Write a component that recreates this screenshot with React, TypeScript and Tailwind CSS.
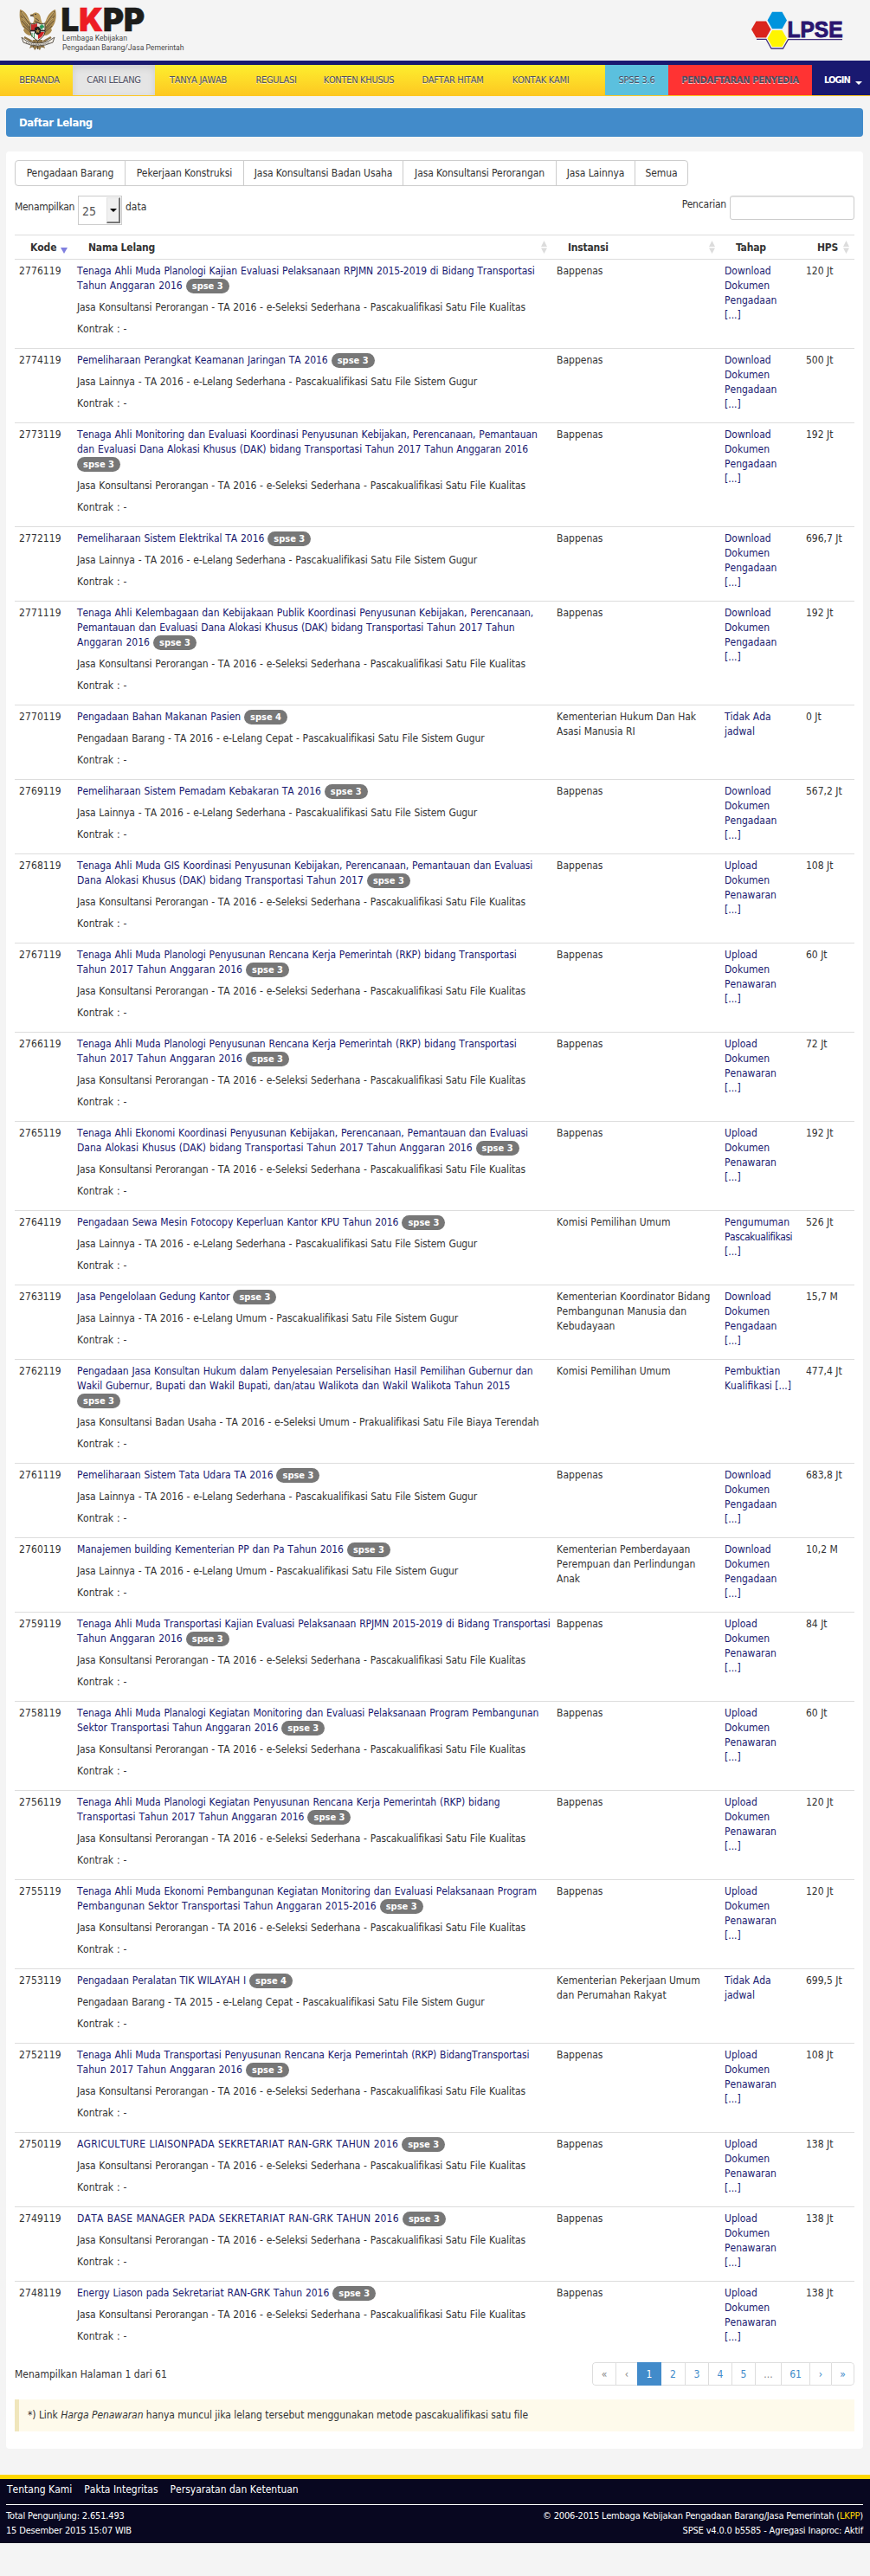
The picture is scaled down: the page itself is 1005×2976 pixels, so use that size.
type Row = {
  kode: string;
  nama: string[];
  spse?: number;
  caps?: boolean;
  jenis: string;
  instansi: string[];
  tahap: string[];
  hps: string;
};

const PERORANGAN = "Jasa Konsultansi Perorangan - TA 2016 - e-Seleksi Sederhana - Pascakualifikasi Satu File Kualitas";
const LAINNYA = "Jasa Lainnya - TA 2016 - e-Lelang Sederhana - Pascakualifikasi Satu File Sistem Gugur";
const LAINNYA_UMUM = "Jasa Lainnya - TA 2016 - e-Lelang Umum - Pascakualifikasi Satu File Sistem Gugur";
const BAPPENAS = ["Bappenas"];
const DOWNLOAD = ["Download", "Dokumen", "Pengadaan", "[...]"];
const UPLOAD = ["Upload", "Dokumen", "Penawaran", "[...]"];
const TIDAK_ADA = ["Tidak Ada", "jadwal"];

// An empty last line in `nama` puts the badge on a line of its own.
const rows: Row[] = [
  { kode: "2776119", nama: ["Tenaga Ahli Muda Planologi Kajian Evaluasi Pelaksanaan RPJMN 2015-2019 di Bidang Transportasi", "Tahun Anggaran 2016"], jenis: PERORANGAN, instansi: BAPPENAS, tahap: DOWNLOAD, hps: "120 Jt" },
  { kode: "2774119", nama: ["Pemeliharaan Perangkat Keamanan Jaringan TA 2016"], jenis: LAINNYA, instansi: BAPPENAS, tahap: DOWNLOAD, hps: "500 Jt" },
  { kode: "2773119", nama: ["Tenaga Ahli Monitoring dan Evaluasi Koordinasi Penyusunan Kebijakan, Perencanaan, Pemantauan", "dan Evaluasi Dana Alokasi Khusus (DAK) bidang Transportasi Tahun 2017 Tahun Anggaran 2016", ""], jenis: PERORANGAN, instansi: BAPPENAS, tahap: DOWNLOAD, hps: "192 Jt" },
  { kode: "2772119", nama: ["Pemeliharaan Sistem Elektrikal TA 2016"], jenis: LAINNYA, instansi: BAPPENAS, tahap: DOWNLOAD, hps: "696,7 Jt" },
  { kode: "2771119", nama: ["Tenaga Ahli Kelembagaan dan Kebijakaan Publik Koordinasi Penyusunan Kebijakan, Perencanaan,", "Pemantauan dan Evaluasi Dana Alokasi Khusus (DAK) bidang Transportasi Tahun 2017 Tahun", "Anggaran 2016"], jenis: PERORANGAN, instansi: BAPPENAS, tahap: DOWNLOAD, hps: "192 Jt" },
  { kode: "2770119", nama: ["Pengadaan Bahan Makanan Pasien"], spse: 4, jenis: "Pengadaan Barang - TA 2016 - e-Lelang Cepat - Pascakualifikasi Satu File Sistem Gugur", instansi: ["Kementerian Hukum Dan Hak", "Asasi Manusia RI"], tahap: TIDAK_ADA, hps: "0 Jt" },
  { kode: "2769119", nama: ["Pemeliharaan Sistem Pemadam Kebakaran TA 2016"], jenis: LAINNYA, instansi: BAPPENAS, tahap: DOWNLOAD, hps: "567,2 Jt" },
  { kode: "2768119", nama: ["Tenaga Ahli Muda GIS Koordinasi Penyusunan Kebijakan, Perencanaan, Pemantauan dan Evaluasi", "Dana Alokasi Khusus (DAK) bidang Transportasi Tahun 2017"], jenis: PERORANGAN, instansi: BAPPENAS, tahap: UPLOAD, hps: "108 Jt" },
  { kode: "2767119", nama: ["Tenaga Ahli Muda Planologi Penyusunan Rencana Kerja Pemerintah (RKP) bidang Transportasi", "Tahun 2017 Tahun Anggaran 2016"], jenis: PERORANGAN, instansi: BAPPENAS, tahap: UPLOAD, hps: "60 Jt" },
  { kode: "2766119", nama: ["Tenaga Ahli Muda Planologi Penyusunan Rencana Kerja Pemerintah (RKP) bidang Transportasi", "Tahun 2017 Tahun Anggaran 2016"], jenis: PERORANGAN, instansi: BAPPENAS, tahap: UPLOAD, hps: "72 Jt" },
  { kode: "2765119", nama: ["Tenaga Ahli Ekonomi Koordinasi Penyusunan Kebijakan, Perencanaan, Pemantauan dan Evaluasi", "Dana Alokasi Khusus (DAK) bidang Transportasi Tahun 2017 Tahun Anggaran 2016"], jenis: PERORANGAN, instansi: BAPPENAS, tahap: UPLOAD, hps: "192 Jt" },
  { kode: "2764119", nama: ["Pengadaan Sewa Mesin Fotocopy Keperluan Kantor KPU Tahun 2016"], jenis: LAINNYA, instansi: ["Komisi Pemilihan Umum"], tahap: ["Pengumuman", "Pascakualifikasi", "[...]"], hps: "526 Jt" },
  { kode: "2763119", nama: ["Jasa Pengelolaan Gedung Kantor"], jenis: LAINNYA_UMUM, instansi: ["Kementerian Koordinator Bidang", "Pembangunan Manusia dan", "Kebudayaan"], tahap: DOWNLOAD, hps: "15,7 M" },
  { kode: "2762119", nama: ["Pengadaan Jasa Konsultan Hukum dalam Penyelesaian Perselisihan Hasil Pemilihan Gubernur dan", "Wakil Gubernur, Bupati dan Wakil Bupati, dan/atau Walikota dan Wakil Walikota Tahun 2015", ""], jenis: "Jasa Konsultansi Badan Usaha - TA 2016 - e-Seleksi Umum - Prakualifikasi Satu File Biaya Terendah", instansi: ["Komisi Pemilihan Umum"], tahap: ["Pembuktian", "Kualifikasi [...]"], hps: "477,4 Jt" },
  { kode: "2761119", nama: ["Pemeliharaan Sistem Tata Udara TA 2016"], jenis: LAINNYA, instansi: BAPPENAS, tahap: DOWNLOAD, hps: "683,8 Jt" },
  { kode: "2760119", nama: ["Manajemen building Kementerian PP dan Pa Tahun 2016"], jenis: LAINNYA_UMUM, instansi: ["Kementerian Pemberdayaan", "Perempuan dan Perlindungan", "Anak"], tahap: DOWNLOAD, hps: "10,2 M" },
  { kode: "2759119", nama: ["Tenaga Ahli Muda Transportasi Kajian Evaluasi Pelaksanaan RPJMN 2015-2019 di Bidang Transportasi", "Tahun Anggaran 2016"], jenis: PERORANGAN, instansi: BAPPENAS, tahap: UPLOAD, hps: "84 Jt" },
  { kode: "2758119", nama: ["Tenaga Ahli Muda Planalogi Kegiatan Monitoring dan Evaluasi Pelaksanaan Program Pembangunan", "Sektor Transportasi Tahun Anggaran 2016"], jenis: PERORANGAN, instansi: BAPPENAS, tahap: UPLOAD, hps: "60 Jt" },
  { kode: "2756119", nama: ["Tenaga Ahli Muda Planologi Kegiatan Penyusunan Rencana Kerja Pemerintah (RKP) bidang", "Transportasi Tahun 2017 Tahun Anggaran 2016"], jenis: PERORANGAN, instansi: BAPPENAS, tahap: UPLOAD, hps: "120 Jt" },
  { kode: "2755119", nama: ["Tenaga Ahli Muda Ekonomi Pembangunan Kegiatan Monitoring dan Evaluasi Pelaksanaan Program", "Pembangunan Sektor Transportasi Tahun Anggaran 2015-2016"], jenis: PERORANGAN, instansi: BAPPENAS, tahap: UPLOAD, hps: "120 Jt" },
  { kode: "2753119", nama: ["Pengadaan Peralatan TIK WILAYAH I"], spse: 4, jenis: "Pengadaan Barang - TA 2015 - e-Lelang Cepat - Pascakualifikasi Satu File Sistem Gugur", instansi: ["Kementerian Pekerjaan Umum", "dan Perumahan Rakyat"], tahap: TIDAK_ADA, hps: "699,5 Jt" },
  { kode: "2752119", nama: ["Tenaga Ahli Muda Transportasi Penyusunan Rencana Kerja Pemerintah (RKP) BidangTransportasi", "Tahun 2017 Tahun Anggaran 2016"], jenis: PERORANGAN, instansi: BAPPENAS, tahap: UPLOAD, hps: "108 Jt" },
  { kode: "2750119", nama: ["AGRICULTURE LIAISONPADA SEKRETARIAT RAN-GRK TAHUN 2016"], caps: true, jenis: PERORANGAN, instansi: BAPPENAS, tahap: UPLOAD, hps: "138 Jt" },
  { kode: "2749119", nama: ["DATA BASE MANAGER PADA SEKRETARIAT RAN-GRK TAHUN 2016"], caps: true, jenis: PERORANGAN, instansi: BAPPENAS, tahap: UPLOAD, hps: "138 Jt" },
  { kode: "2748119", nama: ["Energy Liason pada Sekretariat RAN-GRK Tahun 2016"], jenis: PERORANGAN, instansi: BAPPENAS, tahap: UPLOAD, hps: "138 Jt" },
];

const COLS = "grid grid-cols-[67px_554px_194px_94px_61px]";

function Garuda() {
  return (
    <svg className="h-12 w-11 shrink-0" viewBox="22 10 44 48">
      <path d="M23 11C22 20 23 28 28 33L27 35C29 39 32 41 36 41L40 44H47L51 41C55 41 58 39 60 35L59 33C64 28 66 20 64 11C60 12 55 17 53 24L50 29H37L34 24C32 17 28 12 23 11Z" fill="#a98a50" />
      <path d="M24 13L34 28M24 18L34 32M25 24L35 35M27 30L36 38M63 13L53 28M63 18L53 32M62 24L52 35M60 30L51 38" stroke="#63523a" strokeWidth="1" />
      <path d="M25 14L33 24M26 21L34 30M62 14L54 24M61 21L53 30" stroke="#dcc080" strokeWidth=".8" />
      <path d="M34 17L38 16C39 14 43 14 45 16C48 19 46 23 50 28H37C40 24 40 21 38 18Z" fill="#b6975a" />
      <path d="M39 17L35 18L39 19M41 21L45 24M40 24L46 27" stroke="#594a36" fill="none" strokeWidth="1" />
      <circle cx="41" cy="16.5" r=".8" fill="#222" />
      <path d="M38 46L34 56L38 54L40 58L43 55L46 58L48 54L52 56L49 46Z" fill="#917748" />
      <path d="M40 48L38 55M43.5 48V57M47 48L49 55" stroke="#54452f" strokeWidth=".9" />
      <path d="M28 43L37 48M59 43L50 48" stroke="#8d7347" strokeWidth="2.5" />
      <path d="M35 27Q39 29 43 26Q47 29 52 27V37Q51 43 43.5 47Q36 43 35 37Z" fill="#e9e6dd" stroke="#443b2d" strokeWidth="1" />
      <path d="M36 28Q39 29 43 27V35H36Z" fill="#c62a2b" />
      <path d="M43.5 36H51Q51 42 43.5 46Z" fill="#ddd9cf" />
      <path d="M36 36H43.5V46Q36 42 36 37Z" fill="#eee" />
      <path d="M44 37H51Q50 42 44 45Z" fill="#cf2325" />
      <path d="M35 35.5H52" stroke="#222" strokeWidth="1.6" />
      <path d="M40 32L44 30.5L47 33V38L43.5 40.5L40 38Z" fill="#252321" />
      <path d="M43.5 33L44.5 35L46 35.2L45 36.5L45.3 38L43.5 37.2L41.8 38L42.2 36.5L41 35.2L42.8 35Z" fill="#a7884b" />
      <path d="M46 31.5C46 28 51 28 50.5 31.5L48.5 32V34.5" fill="#23975a" stroke="#23975a" strokeWidth="1" />
      <path d="M37 38V43M39.5 38V44" stroke="#3c9a60" strokeWidth="1" />
      <path d="M25 43L30 47Q43.5 53 57 47L63 43L61 49Q43.5 57 27 49Z" fill="#eeeae2" stroke="#514b43" strokeWidth=".9" />
      <path d="M30 49Q43.5 54 57 49" fill="none" stroke="#65605a" strokeWidth="1.2" strokeDasharray="1 1" />
    </svg>
  );
}

function LkppLogo() {
  return (
    <svg className="h-[62px] w-[152px]" viewBox="70 0 152 62">
      <text x="70.5" y="36.4" fontFamily="Inter, sans-serif" fontWeight="900" fontSize="36.3" fill="#1d1d1b" stroke="#1d1d1b" strokeWidth="0.6" textLength="96.5" lengthAdjust="spacingAndGlyphs">
        L<tspan fill="#ed1c24" stroke="#ed1c24">K</tspan>PP
      </text>
      <g fontFamily="Roboto, sans-serif" fontSize="8.8" fill="#4a4a4a">
        <text x="72" y="47" textLength="75" lengthAdjust="spacingAndGlyphs">Lembaga Kebijakan</text>
        <text x="72" y="57.5" textLength="140.5" lengthAdjust="spacingAndGlyphs">Pengadaan Barang/Jasa Pemerintah</text>
      </g>
    </svg>
  );
}

function LpseLogo() {
  return (
    <svg className="h-[46px] w-[108px] overflow-visible" viewBox="867 13 108 46">
      <path d="M874 45.3H885L891 56H904.5L910.5 45.6H973" fill="none" stroke="#41307d" strokeWidth="1.3" />
      <path d="M868 34L873.5 24.5H885L890.5 34L885 43.5H873.5Z" fill="#da251d" />
      <path d="M886.5 23.5L892 13.8H903.5L909 23.5L903.5 33.2H892Z" fill="#0093dd" />
      <path d="M886.5 44.5L892 35H903.5L909 44.5L903.5 54H892Z" fill="#fff500" />
      <text x="909.5" y="43" fontFamily="Liberation Sans, sans-serif" fontWeight="700" fontSize="26" fill="#2b1670" stroke="#2b1670" strokeWidth="1" textLength="64" lengthAdjust="spacingAndGlyphs">LPSE</text>
    </svg>
  );
}

function SortIcon() {
  return (
    <svg className="mt-[6px] mr-[6px] h-[15px] w-[7px] shrink-0" viewBox="0 0 7 15">
      <path d="M0 7L3.5 0L7 7ZM0 8.5H7L3.5 15Z" fill="#dcdcdc" />
    </svg>
  );
}

function Heading({ children, sort }: { children: string; sort?: boolean }) {
  return (
    <div className="flex justify-between pl-[18px] leading-[28px]">
      <span className="tracking-[-0.2px]">{children}</span>
      {sort && <SortIcon />}
    </div>
  );
}

function Lines({ items }: { items: string[] }) {
  return (
    <>
      {items.map((t, i) => (
        <span key={i} className={`block ${t.includes("kualifikasi") ? "tracking-[-0.45px]" : ""}`}>{t}</span>
      ))}
    </>
  );
}

function titleSpacing(row: Row, line: number) {
  if (row.caps) return "tracking-[0.24px] [word-spacing:0.5px]";
  if (row.nama.length === 1) return "tracking-[-0.06px] [word-spacing:0.5px]";
  if (line === row.nama.length - 1) return "[word-spacing:0.6px]";
  return "tracking-[-0.1px] [word-spacing:0.6px]";
}

function LelangRow({ row }: { row: Row }) {
  const last = row.nama.length - 1;
  return (
    <div className={`${COLS} border-t border-[#ddd] py-[5px] whitespace-nowrap [font-kerning:none]`}>
      <div className="pl-[5px] tracking-[0.1px]">{row.kode}</div>
      <div className="pl-[5px]">
        <div className="mb-2 text-[#191970]">
          {row.nama.map((t, i) => (
            <div key={i} className="flex h-[17px] gap-1">
              {t && <span className={titleSpacing(row, i)}>{t}</span>}
              {i === last && (
                <span className="h-[17px] w-[50px] rounded-full bg-[#777] text-center text-[11px] leading-[18px] font-bold text-white">
                  spse {row.spse ?? 3}
                </span>
              )}
            </div>
          ))}
        </div>
        <p className="mb-2 tracking-[-0.12px] [word-spacing:0.5px]">{row.jenis}</p>
        <p className="mb-2 [word-spacing:0.5px]">Kontrak : -</p>
      </div>
      <div className="pl-[5px]"><Lines items={row.instansi} /></div>
      <div className="pl-[5px] text-[#191970]"><Lines items={row.tahap} /></div>
      <div className="pl-[5px]">{row.hps}</div>
    </div>
  );
}

const nav = [
  { label: "BERANDA", w: "w-[77px]" },
  { label: "CARI LELANG", w: "w-[95px]", active: true },
  { label: "TANYA JAWAB", w: "w-[100px]" },
  { label: "REGULASI", w: "w-[80px]" },
  { label: "KONTEN KHUSUS", w: "w-[111px]" },
  { label: "DAFTAR HITAM", w: "w-[106px]" },
  { label: "KONTAK KAMI", w: "w-[97px]" },
];

const categories = [
  { label: "Pengadaan Barang", w: "w-[126px]" },
  { label: "Pekerjaan Konstruksi", w: "w-[137px]" },
  { label: "Jasa Konsultansi Badan Usaha", w: "w-[184px]" },
  { label: "Jasa Konsultansi Perorangan", w: "w-[177px]" },
  { label: "Jasa Lainnya", w: "w-[91px]" },
  { label: "Semua", w: "w-[61px]" },
];

const pages = [
  { label: "«", w: "w-[27px]", muted: true },
  { label: "‹", w: "w-[25px]", muted: true },
  { label: "1", w: "w-[28px]", active: true },
  { label: "2", w: "w-[27px]" },
  { label: "3", w: "w-[27px]" },
  { label: "4", w: "w-[27px]" },
  { label: "5", w: "w-[27px]" },
  { label: "...", w: "w-[30px]", muted: true },
  { label: "61", w: "w-[33px]" },
  { label: "›", w: "w-[25px]" },
  { label: "»", w: "w-[27px]" },
];

export default function App() {
  return (
    <div className="min-h-[2976px] w-[1005px] bg-[#f4f4f4] font-['DejaVu_Sans_Condensed','DejaVu_Sans',sans-serif] text-[12px] leading-[17px] text-[#333]">
      <header className="flex h-[70px] items-start justify-between pr-[30px] pl-[22px]">
        <div className="flex gap-1">
          <div className="pt-[10px]"><Garuda /></div>
          <LkppLogo />
        </div>
        <div className="pt-[13px]"><LpseLogo /></div>
      </header>

      <nav className="h-[41px] border-t-[5px] border-[#191970] bg-gradient-to-b from-[#fdee2e] to-[#fdc721]">
        <div className="flex h-[35px] pl-[7px] text-center text-[11px] leading-[36px] whitespace-nowrap text-[#4c4c60] [text-shadow:0_1px_0_rgba(255,255,255,0.7)]">
          {nav.map((n) => (
            <a
              key={n.label}
              className={`${n.w} tracking-[-0.3px] [font-kerning:none] ${n.active ? "bg-[#e5e5e5] shadow-[inset_0_3px_8px_rgba(0,0,0,0.12)]" : ""}`}
            >
              {n.label}
            </a>
          ))}
          <a className="ml-auto w-[73px] bg-[#5bc0de] tracking-[-0.2px]">SPSE 3.6</a>
          <a className="w-[166px] bg-[#ff3333] font-bold tracking-[-0.28px]">PENDAFTARAN PENYEDIA</a>
          <a className="flex w-[67px] items-center bg-[#191970] pl-[14px] font-bold tracking-[-0.9px] text-white [text-shadow:none]">
            LOGIN
            <span className="mt-[7px] ml-[6px] border-x-4 border-t-4 border-x-transparent border-t-white" />
          </a>
        </div>
      </nav>

      <main className="pr-2 pl-[7px]">
        <h1 className="mt-[14px] h-[33px] rounded bg-[#428bca] pl-[15px] text-[13px] leading-[33px] font-bold tracking-[-0.4px] text-white">
          Daftar Lelang
        </h1>

        <section className="mt-[17px] h-[2654px] rounded bg-white px-[10px] pt-[10px]">
          <div className="flex w-[778px] overflow-hidden rounded border border-[#ccc] whitespace-nowrap">
            {categories.map((c, i) => (
              <button key={c.label} className={`${c.w} h-[28px] shrink-0 text-center tracking-[-0.09px] ${i ? "border-l border-[#ccc]" : ""}`}>
                {c.label}
              </button>
            ))}
          </div>

          <div className="mt-[11px] flex h-[45px] items-start">
            <span className="w-[73px] shrink-0 pt-[5px] tracking-[-0.3px]">Menampilkan</span>
            <div className="flex h-[34px] w-[51px] justify-between border border-[#ccc] p-px pl-1 text-[14px] leading-[33px] text-[#555]">
              25
              <span className="flex w-4 items-center justify-center border-t border-r-2 border-b-2 border-l border-t-[#e3e3e3] border-r-[#777] border-b-[#777] border-l-[#e3e3e3] bg-[#f0f0f0]">
                <span className="border-x-4 border-t-4 border-x-transparent border-t-black" />
              </span>
            </div>
            <span className="pt-[5px] pl-1">data</span>
            <span className="mr-1 ml-auto pt-[2px] tracking-[-0.2px]">Pencarian</span>
            <span className="h-[28px] w-[144px] shrink-0 rounded-[3px] border border-[#ccc] bg-white shadow-[inset_0_1px_1px_rgba(0,0,0,0.075)]" />
          </div>

          <div>
            <div className={`${COLS} h-[28px] border-t border-[#ddd] font-bold`}>
              <div className="flex pl-[18px] leading-[28px]">
                Kode
                <svg className="mt-[14px] ml-[4px] h-[7px] w-[8px]" viewBox="0 0 8 7">
                  <path d="M0 0H8L4 7Z" fill="#7f7fdf" />
                </svg>
              </div>
              <Heading sort>Nama Lelang</Heading>
              <Heading sort>Instansi</Heading>
              <Heading>Tahap</Heading>
              <Heading sort>HPS</Heading>
            </div>
            {rows.map((r) => (
              <LelangRow key={r.kode} row={r} />
            ))}
          </div>

          <div className="mt-2 flex h-[27px] justify-between">
            <span className="pt-[6px]">Menampilkan Halaman 1 dari 61</span>
            <div className="flex overflow-hidden rounded text-center text-[#428bca]">
              {pages.map((p, i) => (
                <a
                  key={p.label}
                  className={`${p.w} border-y leading-[26px] ${p.active ? "border-[#428bca] bg-[#428bca] text-white" : "border-[#ddd]"} ${p.muted ? "text-[#888]" : ""} ${i === 0 ? "rounded-l border-l" : ""} ${i === pages.length - 1 ? "rounded-r border-r" : ""} ${i > 0 && i !== 2 && i !== 3 ? "border-l" : ""}`}
                >
                  {p.label}
                </a>
              ))}
            </div>
          </div>

          <div className="mt-4 h-[37px] border-l-[5px] border-[#f0e6bc] bg-[#fefaeb] pl-[10px] leading-[37px] tracking-[-0.05px]">
            *) Link <i>Harga Penawaran</i> hanya muncul jika lelang tersebut menggunakan metode pascakualifikasi satu file
          </div>
        </section>
      </main>

      <footer className="mt-[30px] h-[79px] border-t-[5px] border-[#ffd700] bg-[#080720] pr-2 pl-[7px] text-white">
        <div className="flex h-[29px] gap-[14px] pt-1 pl-px [font-kerning:none]">
          <a>Tentang Kami</a>
          <a>Pakta Integritas</a>
          <a>Persyaratan dan Ketentuan</a>
        </div>
        <div className="flex justify-between border-t border-white pt-1 text-[11px] tracking-[-0.17px]">
          <div>
            <div>Total Pengunjung: 2.651.493</div>
            <div>15 Desember 2015 15:07 WIB</div>
          </div>
          <div className="text-right">
            <div>© 2006-2015 Lembaga Kebijakan Pengadaan Barang/Jasa Pemerintah (<span className="text-[#ffd700]">LKPP</span>)</div>
            <div>SPSE v4.0.0 b5585 - Agregasi Inaproc: Aktif</div>
          </div>
        </div>
      </footer>
    </div>
  );
}
